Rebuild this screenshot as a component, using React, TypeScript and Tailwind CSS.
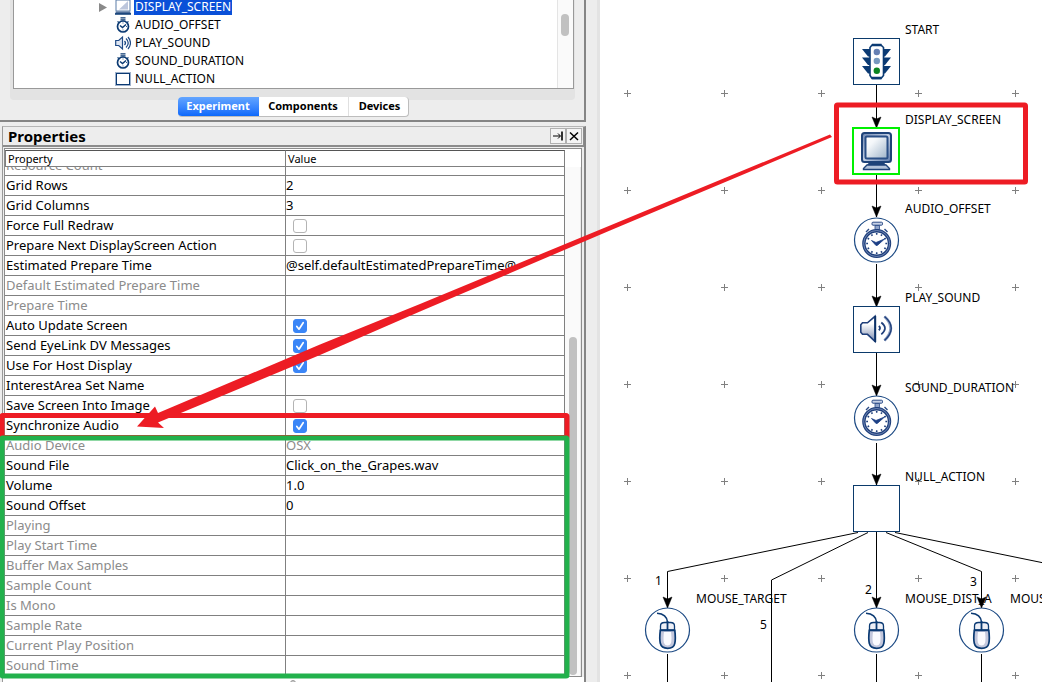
import type { ReactNode } from "react";

const NAVY = "#0b3a73";

function MonitorArt() {
  return (
    <g>
      <defs>
        <linearGradient id="screenShade" x1="0" y1="0" x2="1" y2="1">
          <stop offset="0" stopColor="#ffffff" />
          <stop offset="0.3" stopColor="#f4f7fa" />
          <stop offset="1" stopColor="#9db3c9" />
        </linearGradient>
        <linearGradient id="bezelShade" x1="0" y1="0" x2="1" y2="1">
          <stop offset="0" stopColor="#7089b3" />
          <stop offset="0.5" stopColor="#c3cfe3" />
          <stop offset="1" stopColor="#5f7cab" />
        </linearGradient>
      </defs>
      <rect x="10" y="6" width="29" height="29" rx="2.5" fill="url(#bezelShade)" stroke="#1f4379" strokeWidth="2" />
      <rect x="13.5" y="9.5" width="22" height="22" rx="1.5" fill="url(#screenShade)" stroke="#2a4f86" strokeWidth="2" />
      <path d="M17 35.5h15l2 2.5H15z" fill="#1f4379" />
      <path d="M15 38h19l3.5 3.5v1h-26v-1z" fill="#b4c3da" stroke="#1f4379" strokeWidth="1.4" />
    </g>
  );
}

function TrafficArt() {
  return (
    <g>
      {[11, 19.5, 28].map((y) => (
        <g key={y} fill={NAVY}>
          <path d={`M9 ${y}h8.5v7.5h-2.5z`} />
          <path d={`M38 ${y}h-8.5v7.5h2.5z`} />
        </g>
      ))}
      <path d="M19 7h9l2.5 2.5v28l-2.5 3h-9l-2-3v-28z" fill="#fff" stroke={NAVY} strokeWidth="1.6" />
      <path d="M19 7h9.5M19 40h9.5" stroke={NAVY} strokeWidth="2.4" />
      <circle cx="23.8" cy="14" r="3.2" fill="#6680b3" />
      <circle cx="23.8" cy="23" r="3.2" fill="#7799bf" />
      <circle cx="23.8" cy="32.7" r="3.2" fill="#0a8420" />
    </g>
  );
}

function WatchArt() {
  return (
    <g>
      <rect x="19" y="5.2" width="10.5" height="3" rx="1" fill="#c6d1e6" stroke="#2a4a86" />
      <path d="M22 8.5h4.5v4H22z" fill="#8fa3c8" stroke="#2a4a86" strokeWidth="0.8" />
      <path d="M13 15l3-3M34.5 15l-3-3" stroke="#2a4a86" strokeWidth="1.4" />
      <circle cx="23.7" cy="26.5" r="12.8" fill="#fff" stroke="#20407c" strokeWidth="3.4" />
      <circle cx="23.7" cy="26.5" r="13" fill="none" stroke="#8fa2ca" strokeWidth="0.7" />
      <circle
        cx="23.7"
        cy="26.5"
        r="9.6"
        fill="none"
        stroke="#20407c"
        strokeWidth="1.8"
        pathLength="48"
        strokeDasharray="1.3 2.7"
        strokeDashoffset="0.65"
      />
      <path d="M18.5 23.5l4.5 2 8.5-3.5-7 6.3-1.5.2z" fill="#1c3f85" stroke="#1c3f85" strokeWidth="0.8" />
    </g>
  );
}

function SpeakerArt() {
  return (
    <g fill="none">
      <defs>
        <linearGradient id="coneShade" x1="0" y1="0" x2="0" y2="1">
          <stop offset="0.3" stopColor="#ffffff" />
          <stop offset="1" stopColor="#7c8cb0" />
        </linearGradient>
      </defs>
      <path d="M9.500 16.800h5l7.500-6.500v25l-7.500-7H9.500l-1.700-2v-7.500z" fill="url(#coneShade)" stroke="#1f3f7a" strokeWidth="1.6" />
      <path d="M22.3 10v26" stroke="#0b3166" strokeWidth="1.8" />
      <path d="M25.8 20q2.5 2 0 4.2" stroke="#1f3f7a" strokeWidth="1.8" />
      <path d="M28.3 16.500q7.4 5.8 0 11.8" stroke="#1f3f7a" strokeWidth="1.7" />
      <path d="M31.5 10.500q12.5 11.5 0 24" stroke="#90a2c6" strokeWidth="3" />
      <path d="M31.5 10.500q13.5 11.5 0 24" stroke="#1f3f7a" strokeWidth="1.4" />
    </g>
  );
}

function MouseArt() {
  return (
    <g>
      <path d="M13 6.300c5.500.3 10 2.700 10.700 9.200" fill="none" stroke={NAVY} strokeWidth="1.5" />
      <path d="M16.500 23v-4q0-3.500 4-3.500h6q4 0 4 3.500v4z" fill="#eef0f7" stroke={NAVY} strokeWidth="1.3" />
      <path d="M16.300 23.300h14.500q1 8 0 13-1 5-7.200 5t-7.300-5q-1-5 0-13z" fill="#c3c7dc" stroke={NAVY} strokeWidth="1.7" />
      <path d="M20 25h7q1 7 0 11-1 2.500-3.500 2.500t-3.500-2.500q-1-4 0-11z" fill="#fafafe" />
      <path d="M23.500 14v9" stroke={NAVY} strokeWidth="1.8" />
    </g>
  );
}

type Shape = "square" | "circle" | "selected";

function Node({ x, y, shape, children }: { x: number; y: number; shape: Shape; children?: ReactNode }) {
  return (
    <svg className="absolute size-12" style={{ left: x, top: y }} viewBox="0 0 48 48">
      {shape === "square" && <rect x="0.5" y="0.5" width="46" height="46" fill="#fff" stroke="#0b3a6b" />}
      {shape === "circle" && <circle cx="23.5" cy="23" r="22" fill="#fff" stroke="#1c4a84" strokeWidth="1.2" />}
      {shape === "selected" && <rect x="1" y="1" width="46" height="46" fill="#fff" stroke="#00f000" strokeWidth="2" />}
      {children}
    </svg>
  );
}

const smallWatch = (
  <svg className="size-4" viewBox="0 0 16 16" fill="none" stroke={NAVY}>
    <path d="M5.500 .8h5M5.500 2.800h5M2.500 4.500l1.500 1M13.500 4.500l-1.500 1" strokeWidth="1.2" />
    <circle cx="8" cy="9.5" r="5.5" fill="#fff" strokeWidth="1.7" />
    <path d="M5 8.500l2.500 2 3.500-3" strokeWidth="1.5" />
    <path d="M8 5.500v1M8 12.500v1M12 9.500h-1" strokeWidth="0.8" />
  </svg>
);
const smallSpeaker = (
  <svg className="size-4" viewBox="0 0 16 16" fill="none" stroke="#1f4a86">
    <path d="M.7 5.500h3L7.500 2v12L3.700 10.500h-3z" fill="#dfe6f2" strokeWidth="1.2" />
    <path d="M9.500 6q2 2 0 4" strokeWidth="1.3" />
    <path d="M11 3.500q4.500 4.500 0 9M13 2q5 6 0 12" strokeWidth="1.2" />
  </svg>
);
const smallBox = (
  <svg className="size-4" viewBox="0 0 16 16">
    <rect x="0.5" y="1.5" width="15" height="13" fill="#fff" stroke="#9fb2cc" />
    <rect x="1.5" y="2.5" width="13" height="11" fill="#fff" stroke={NAVY} />
  </svg>
);
const smallMonitor = (
  <svg className="size-4" viewBox="0 0 16 16">
    <rect x="1" y="1" width="14" height="11" fill="#fff" stroke="#5a7ca8" />
    <path d="M4 10.500L13 2v8.500z" fill="#bcc6dc" />
    <path d="M1 12.500h14l1 2.500H0z" fill="#4d6c98" />
    <path d="M0 15h16" stroke={NAVY} strokeWidth="1.5" />
  </svg>
);

const tree = [
  { name: "DISPLAY_SCREEN", icon: smallMonitor, selected: true },
  { name: "AUDIO_OFFSET", icon: smallWatch },
  { name: "PLAY_SOUND", icon: smallSpeaker },
  { name: "SOUND_DURATION", icon: smallWatch },
  { name: "NULL_ACTION", icon: smallBox },
];

type Row = { name: string; value?: string | boolean; muted?: boolean };
const rows: Row[] = [
  { name: "Grid Rows", value: "2" },
  { name: "Grid Columns", value: "3" },
  { name: "Force Full Redraw", value: false },
  { name: "Prepare Next DisplayScreen Action", value: false },
  { name: "Estimated Prepare Time", value: "@self.defaultEstimatedPrepareTime@" },
  { name: "Default Estimated Prepare Time", muted: true },
  { name: "Prepare Time", muted: true },
  { name: "Auto Update Screen", value: true },
  { name: "Send EyeLink DV Messages", value: true },
  { name: "Use For Host Display", value: true },
  { name: "InterestArea Set Name" },
  { name: "Save Screen Into Image", value: false },
  { name: "Synchronize Audio", value: true },
  { name: "Audio Device", value: "OSX", muted: true },
  { name: "Sound File", value: "Click_on_the_Grapes.wav" },
  { name: "Volume", value: "1.0" },
  { name: "Sound Offset", value: "0" },
  { name: "Playing", muted: true },
  { name: "Play Start Time", muted: true },
  { name: "Buffer Max Samples", muted: true },
  { name: "Sample Count", muted: true },
  { name: "Is Mono", muted: true },
  { name: "Sample Rate", muted: true },
  { name: "Current Play Position", muted: true },
  { name: "Sound Time", muted: true },
];

function Check({ name, on }: { name: string; on: boolean }) {
  return (
    <span className="relative ml-[7px] block size-[14px]">
      <input
        type="checkbox"
        aria-label={name}
        defaultChecked={on}
        className="peer block size-[14px] appearance-none rounded-[3px] border border-[#b4b4b4] bg-white checked:border-[#3b86f7] checked:bg-[#3b86f7]"
      />
      <svg className="pointer-events-none absolute inset-0 hidden size-[14px] peer-checked:block" viewBox="0 0 14 14">
        <path d="M3.800 7.500l2.200 2.700 4.200-6.500" fill="none" stroke="#fff" strokeWidth="1.7" strokeLinecap="round" strokeLinejoin="round" />
      </svg>
    </span>
  );
}

function TreePanel() {
  return (
    <section className="border-r-2 border-b-2 border-[#858585] bg-[#ededed]">
      <div className="mr-[9px] ml-[10px] rounded-b bg-[#e3e3e3] pr-px pb-[11px] pl-[3px]">
        <div className="flex h-[89px] overflow-hidden border-x border-b border-[#999] bg-white">
          <ul className="-mt-[2px] flex-1">
            {tree.map((t) => (
              <li key={t.name} className="flex h-[18px] items-center pl-[85px] text-[12px] leading-[18px]">
                <svg className="mr-2 h-[9px] w-2" viewBox="0 0 8 9">
                  {t.selected && <path d="M0 0l8 4.500L0 9z" fill="#898989" />}
                </svg>
                {t.icon}
                <span className={t.selected ? "ml-[3px] h-4 bg-[#0a50d8] px-px leading-4 text-white" : "ml-[3px] px-px"}>{t.name}</span>
              </li>
            ))}
          </ul>
          <div className="w-4 border-l border-[#e4e4e4] bg-[#fafafa] pt-[14px]">
            <div className="ml-[3px] h-[22px] w-2 rounded-full bg-[#c1c1c1]" />
          </div>
        </div>
      </div>
      <div className="relative -mt-[3px] flex justify-center pb-[3px] pl-[2px]">
        <div className="flex h-5 overflow-hidden rounded border-r border-b border-[#bdbdbd] bg-white text-[11px] font-bold">
          <button className="w-[81px] bg-linear-to-b from-[#63a5ff] to-[#0a68fb] text-white">Experiment</button>
          <button className="w-[89px]">Components</button>
          <button className="w-[60px] border-l border-[#e0e0e0] pl-[3px]">Devices</button>
        </div>
      </div>
    </section>
  );
}

function PropertiesPanel() {
  return (
    <section className="mt-1 ml-[2px] flex flex-1 flex-col border-t border-r-2 border-l border-t-[#b5b5b5] border-r-[#858585] border-l-[#999]">
      <header className="flex h-5 items-center border-r border-b-2 border-[#8c8c8c] bg-[#ededed] pr-px pl-[5px]">
        <h2 className="flex-1 text-[15px] leading-[18px] font-bold">Properties</h2>
        <button aria-label="Dock" className="flex size-4 items-center justify-center border border-[#b0b0b0] bg-[#f4f4f4]">
          <svg className="size-3" viewBox="0 0 12 12" fill="none" stroke="#000">
            <path d="M1 6h7M6 3.500L8.500 6 6 8.500" />
            <path d="M10 1.500v9" strokeWidth="1.6" />
          </svg>
        </button>
        <button aria-label="Close" className="flex size-4 items-center justify-center border border-[#b0b0b0] bg-[#f4f4f4]">
          <svg className="size-3" viewBox="0 0 12 12" fill="none" stroke="#000" strokeWidth="1.5">
            <path d="M2 2.500l8 7.500M10 2.500L2 10" />
          </svg>
        </button>
      </header>
      <div className="mt-px mr-[2px] ml-px flex border border-[#8c8c8c] bg-white pt-px">
        <table className="flex-1 table-fixed border-separate border-spacing-0 text-left text-[13px]">
          <thead>
            <tr className="text-[11px] leading-[15px]">
              <th className="w-[281px] border border-[#808080] border-t-[#555] pl-[2px] font-normal">Property</th>
              <th className="border-y border-r border-[#808080] border-t-[#555] pl-[2px] font-normal">Value</th>
            </tr>
          </thead>
          <tbody>
            <tr className="text-[#8b8b8b]">
              <td className="border-r border-b border-[#808080] p-0">
                <div className="flex h-2 items-end overflow-hidden pl-px leading-[19px]">Resource Count</div>
              </td>
              <td className="border-r border-b border-[#808080] p-0" />
            </tr>
            {rows.map((r) => (
              <tr key={r.name} className={r.muted ? "h-5 leading-[19px] text-[#8b8b8b]" : "h-5 leading-[19px]"}>
                <td className="border-r border-b border-[#808080] py-0 pr-0 pl-px">{r.name}</td>
                <td className="border-r border-b border-[#808080] p-0">
                  {typeof r.value === "boolean" ? <Check name={r.name} on={r.value} /> : r.value}
                </td>
              </tr>
            ))}
          </tbody>
        </table>
        <div className="w-4 pt-[17px]">
          <div className="h-full border-r border-[#e8e8e8] bg-[#fafafa] pt-[170px]">
            <div className="ml-[4px] h-full max-h-[338px] w-2 rounded-full bg-[#c1c1c1]" />
          </div>
        </div>
      </div>
      <div className="flex-1 overflow-hidden bg-white pt-[3px] pl-[287px]">
        <div className="size-[6px] rounded-full border border-[#999] bg-[#ccc]" />
      </div>
    </section>
  );
}

const labels = [
  { t: "START", x: 305, y: 21 },
  { t: "DISPLAY_SCREEN", x: 305, y: 111 },
  { t: "AUDIO_OFFSET", x: 305, y: 200 },
  { t: "PLAY_SOUND", x: 305, y: 289 },
  { t: "SOUND_DURATION", x: 305, y: 379 },
  { t: "NULL_ACTION", x: 305, y: 468 },
  { t: "MOUSE_TARGET", x: 96, y: 590 },
  { t: "MOUSE_DIST_A", x: 305, y: 590 },
  { t: "MOUSE_DIST_B", x: 410, y: 590 },
  { t: "1", x: 55, y: 572 },
  { t: "2", x: 265, y: 581 },
  { t: "3", x: 370, y: 573 },
  { t: "5", x: 160, y: 616 },
];

const arrows: [number, number][] = [
  [276.5, 128],
  [276.5, 217],
  [276.5, 307],
  [276.5, 396],
  [276.5, 485],
  [276.5, 608],
  [67.5, 608],
  [381.5, 608],
];

function Canvas() {
  return (
    <main className="relative flex-1 overflow-hidden bg-white">
      <svg className="absolute inset-0 size-full">
        <defs>
          <pattern id="grid" x="0" y="0" width="97" height="97" patternUnits="userSpaceOnUse">
            <path d="M24 93.500h7M27.500 90v7" stroke="#808080" fill="none" />
          </pattern>
        </defs>
        <rect width="100%" height="100%" fill="url(#grid)" />
      </svg>
      {labels.map((l) => (
        <span key={l.t} className="absolute text-[12px] leading-[18px] whitespace-nowrap" style={{ left: l.x, top: l.y }}>
          {l.t}
        </span>
      ))}
      <svg className="absolute inset-0 size-full" fill="none" stroke="#000">
        <path d="M276.500 85V127M276.500 175V217M276.500 264V306M276.500 353V396M276.500 443V485M276.500 532V608M276.500 654V900M67.500 654V900M381.500 654V900" />
        <path d="M258 532.500L67.500 571.500V608M268 532.500L171.500 580V900M286 532.500L381.500 571.500V608M295 532.500L444 563" />
        {arrows.map(([x, y]) => (
          <path key={`${x}-${y}`} d={`M${x} ${y}l-4.5 -11l4.5 2l4.5 -2z`} fill="#000" stroke="#000" strokeWidth="0.5" />
        ))}
      </svg>
      <Node x={253} y={38} shape="square"><TrafficArt /></Node>
      <Node x={252} y={127} shape="selected"><MonitorArt /></Node>
      <Node x={253} y={217} shape="circle"><WatchArt /></Node>
      <Node x={253} y={306} shape="square"><SpeakerArt /></Node>
      <Node x={253} y={395} shape="circle"><WatchArt /></Node>
      <Node x={253} y={485} shape="square" />
      <Node x={44} y={607} shape="circle"><MouseArt /></Node>
      <Node x={253} y={607} shape="circle"><MouseArt /></Node>
      <Node x={358} y={607} shape="circle"><MouseArt /></Node>
    </main>
  );
}

export default function App() {
  return (
    <div className="relative flex h-screen overflow-hidden bg-[#f7f7f7] font-['Noto_Sans',sans-serif] text-black">
      <aside className="flex w-[600px] shrink-0 border-r-[3px] border-[#e3e3e3] bg-[#ededed]">
        <div className="flex w-[586px] flex-col">
          <TreePanel />
          <PropertiesPanel />
        </div>
      </aside>
      <Canvas />
      <svg className="pointer-events-none absolute inset-0 size-full" fill="none">
        <rect x="2" y="415.5" width="565" height="22" rx="1" stroke="#ed1c24" strokeWidth="5" />
        <rect x="2" y="438" width="565" height="238" rx="1" stroke="#22b14c" strokeWidth="5" />
        <rect x="836.5" y="105" width="189" height="77" rx="1" stroke="#ed1c24" strokeWidth="5" />
        <path d="M137 426.500L155 406.500L158 413L320 344.500L420 304L610 225.500L830 134.500L832 137L610 230.500L420 311.500L320 355L158 422.500L164 428z" fill="#ed1c24" />
      </svg>
    </div>
  );
}
